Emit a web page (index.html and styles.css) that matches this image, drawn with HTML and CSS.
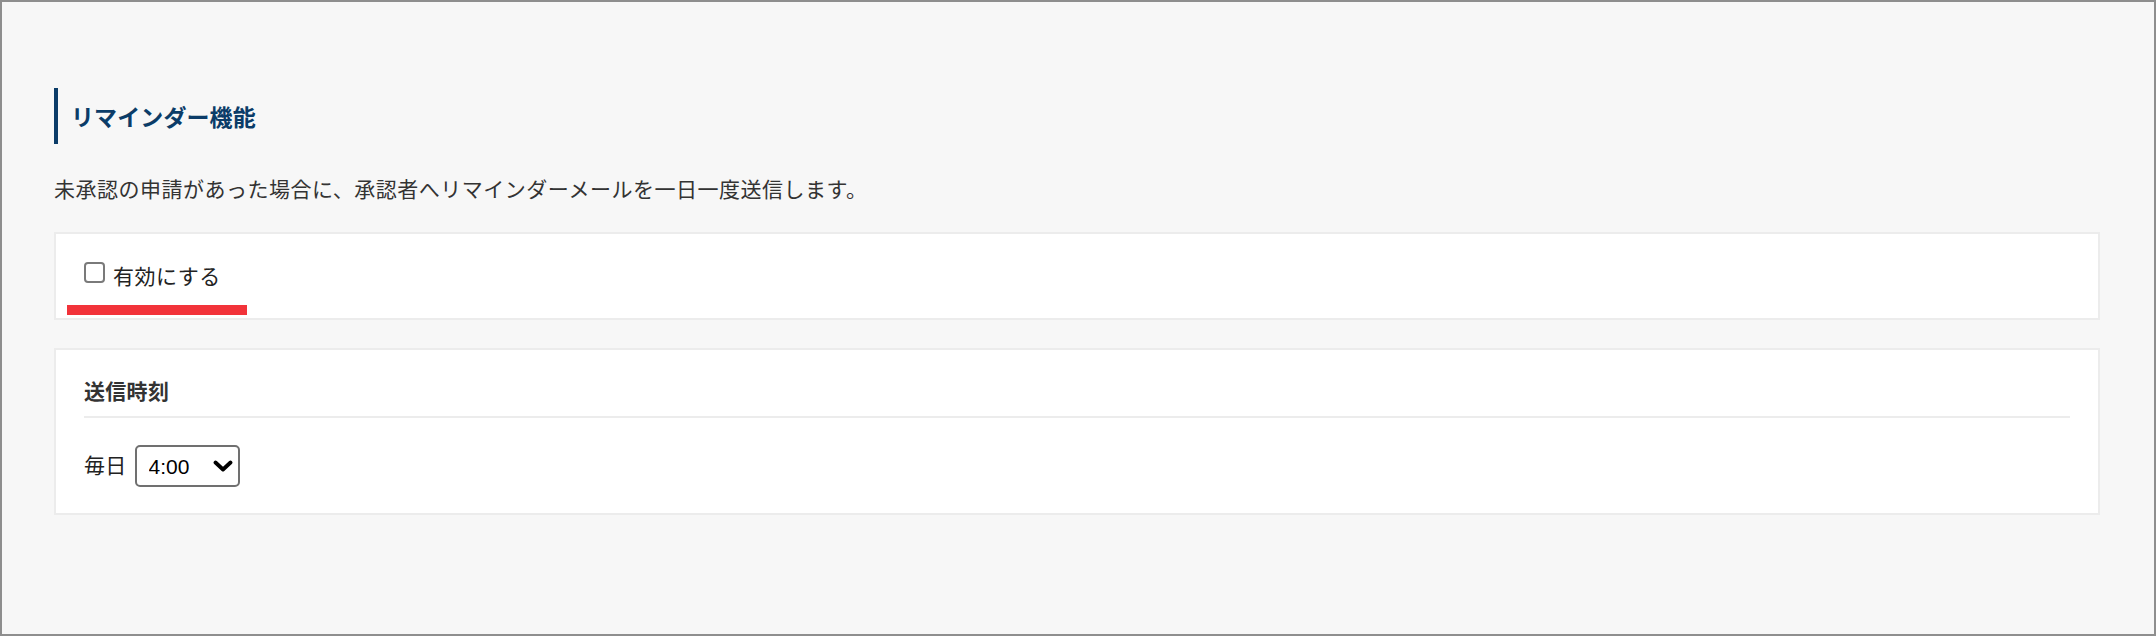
FILE: index.html
```html
<!DOCTYPE html>
<html lang="ja">
<head>
<meta charset="utf-8">
<title>リマインダー機能</title>
<link rel="stylesheet" href="styles.css">
</head>
<body>
<div class="frame">
  <h2 class="section-title">リマインダー機能</h2>
  <p class="description">未承認の申請があった場合に、承認者へリマインダーメールを一日一度送信します。</p>

  <div class="card card-enable">
    <label class="check-row">
      <input type="checkbox" class="check">
      <span class="check-label">有効にする</span>
    </label>
    <span class="annotation-bar"></span>
  </div>

  <div class="card card-time">
    <div class="card-title">送信時刻</div>
    <div class="time-row">
      <span class="time-prefix">毎日</span>
      <span class="select-wrap">
        <select class="time-select">
          <option>4:00</option>
        </select>
        <svg class="select-arrow" width="20" height="12" viewBox="0 0 20 12" aria-hidden="true">
          <polyline points="2.5,2.5 10,9.5 17.5,2.5" fill="none" stroke="#000" stroke-width="3.8" stroke-linecap="round" stroke-linejoin="round"/>
        </svg>
      </span>
    </div>
  </div>
</div>
</body>
</html>
```

FILE: styles.css
```css
* {
  box-sizing: border-box;
}

html, body {
  margin: 0;
  padding: 0;
}

body {
  font-family: "Noto Sans CJK JP", "Noto Sans", sans-serif;
  color: #333;
  background: #f7f7f7;
}

.frame {
  width: 2156px;
  height: 636px;
  border: 2px solid #8e8e8e;
  background: #f7f7f7;
  padding: 86px 54px 0 52px;
}

.section-title {
  margin: 0;
  height: 56px;
  display: flex;
  align-items: center;
  border-left: 4px solid #0b3c68;
  padding-left: 13px;
  font-size: 23px;
  font-weight: 700;
  color: #0b3c68;
  line-height: 1;
  letter-spacing: 0.1px;
}

.description {
  margin: 28px 0;
  font-size: 21px;
  line-height: 32px;
  letter-spacing: 0.5px;
  color: #333;
}

.card {
  position: relative;
  background: #fff;
  border: 2px solid #ececec;
}

.card-enable {
  height: 88px;
  padding: 26px 28px 0 28px;
}

.check-row {
  display: flex;
  align-items: center;
  height: 30px;
  cursor: pointer;
}

.check {
  appearance: none;
  -webkit-appearance: none;
  width: 21px;
  height: 21px;
  margin: 0 8px 6px 0;
  border: 2px solid #7a7a7a;
  border-radius: 4px;
  background: #fff;
  flex: none;
}

.check-label {
  font-size: 21px;
  line-height: 30px;
  letter-spacing: 0.5px;
  color: #222;
}

.annotation-bar {
  position: absolute;
  left: 11px;
  top: 71px;
  width: 180px;
  height: 10px;
  background: #f2333a;
}

.card-time {
  margin-top: 28px;
  height: 167px;
  padding: 24px 28px 0 28px;
}

.card-title {
  font-size: 21px;
  font-weight: 700;
  line-height: 32px;
  letter-spacing: 0.3px;
  color: #333;
  padding-bottom: 10px;
  border-bottom: 2px solid #ececec;
}

.time-row {
  display: flex;
  align-items: center;
  margin-top: 27px;
  height: 42px;
}

.time-prefix {
  font-size: 21px;
  line-height: 30px;
  letter-spacing: 0.3px;
  color: #222;
  margin-right: 8px;
  margin-bottom: 4px;
}

.select-wrap {
  position: relative;
  display: inline-block;
  width: 105px;
  height: 42px;
}

.time-select {
  appearance: none;
  -webkit-appearance: none;
  width: 105px;
  height: 42px;
  border: 2px solid #707070;
  border-radius: 5px;
  background: #fff;
  padding: 0 0 0 12px;
  font-family: "Liberation Sans", Arial, sans-serif;
  font-size: 21px;
  color: #000;
}

.select-arrow {
  position: absolute;
  right: 7px;
  top: 15px;
  pointer-events: none;
}
```
